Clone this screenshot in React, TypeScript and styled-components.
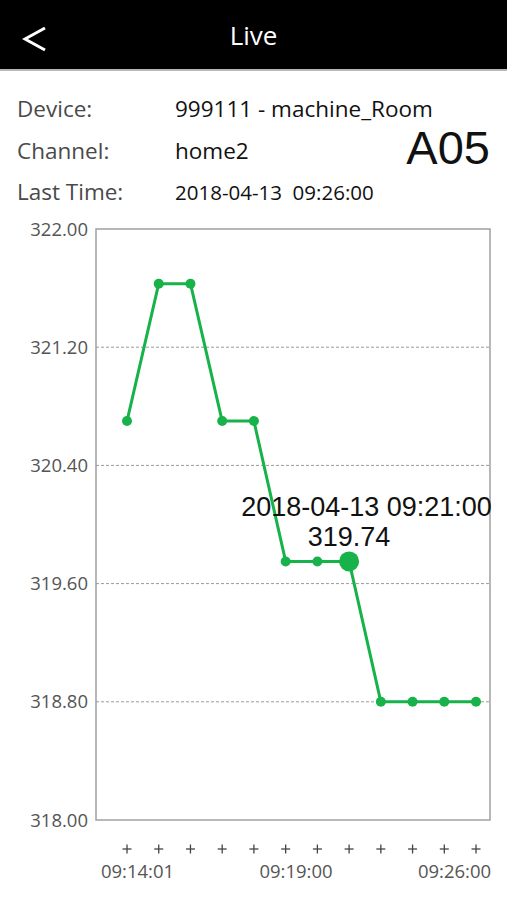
import React from 'react';
import styled, { createGlobalStyle } from 'styled-components';

const GlobalStyle = createGlobalStyle`
  html, body {
    margin: 0;
    padding: 0;
    background: #ffffff;
  }
  body {
    font-family: "Open Sans", "Noto Sans", sans-serif;
  }
`;

const values = [320.7, 321.63, 321.63, 320.7, 320.7, 319.75, 319.75, 319.75, 318.8, 318.8, 318.8, 318.8];
const yTicks = ['322.00', '321.20', '320.40', '319.60', '318.80', '318.00'];

// plot area inside the chart svg (svg starts at page y = 215)
const PLOT = { left: 96, top: 14, right: 490, bottom: 605 };
const MIN = 318;
const MAX = 322;
const STEP_X = 31.73;
const FIRST_X = 127;

const px = (i: number) => FIRST_X + i * STEP_X;
const py = (v: number) => PLOT.top + ((MAX - v) / (MAX - MIN)) * (PLOT.bottom - PLOT.top);

export default function App() {
  const selected = 7;
  const points = values.map((v, i) => `${px(i)},${py(v)}`).join(' ');
  const gridStep = (PLOT.bottom - PLOT.top) / 5;

  return (
    <Page>
      <GlobalStyle />
      <Header>
        <BackButton>
          <svg width="26" height="26" viewBox="0 0 26 26">
            <polyline points="23,2 3,13 23,24" fill="none" stroke="#fff" strokeWidth="3" />
          </svg>
        </BackButton>
        <Title>Live</Title>
      </Header>

      <Info>
        <Label>Device:</Label>
        <Value $wide>999111 - machine_Room</Value>
        <Label>Channel:</Label>
        <Value>home2</Value>
        <Code>A05</Code>
        <Label>Last Time:</Label>
        <Value $small>2018-04-13&nbsp;&nbsp;09:26:00</Value>
      </Info>

      <Chart width="507" height="685" viewBox="0 0 507 685">
        {[1, 2, 3, 4].map((k) => (
          <line
            key={k}
            x1={PLOT.left}
            x2={PLOT.right}
            y1={PLOT.top + k * gridStep}
            y2={PLOT.top + k * gridStep}
            stroke="#9a9a9a"
            strokeWidth="1"
            strokeDasharray="3 2"
          />
        ))}
        <rect
          x={PLOT.left}
          y={PLOT.top}
          width={PLOT.right - PLOT.left}
          height={PLOT.bottom - PLOT.top}
          fill="none"
          stroke="#a0a0a0"
          strokeWidth="1.5"
        />
        {yTicks.map((t, k) => (
          <AxisText key={t} x="88" y={PLOT.top + k * gridStep + 6.5} textAnchor="end">
            {t}
          </AxisText>
        ))}

        <polyline points={points} fill="none" stroke="#18b24b" strokeWidth="3" strokeLinejoin="round" />
        {values.map((v, i) => (
          <circle key={i} cx={px(i)} cy={py(v)} r={i === selected ? 10 : 5} fill="#18b24b" />
        ))}

        <TipText x="366.5" y="301" textAnchor="middle">2018-04-13 09:21:00</TipText>
        <TipText x="349" y="331" textAnchor="middle">319.74</TipText>

        {values.map((_, i) => (
          <g key={i} stroke="#444" strokeWidth="1.3">
            <line x1={px(i) - 4.5} x2={px(i) + 4.5} y1="634" y2="634" />
            <line x1={px(i)} x2={px(i)} y1="629.5" y2="638.5" />
          </g>
        ))}
        <AxisText x="137.5" y="663" textAnchor="middle">09:14:01</AxisText>
        <AxisText x="296" y="663" textAnchor="middle">09:19:00</AxisText>
        <AxisText x="454.5" y="663" textAnchor="middle">09:26:00</AxisText>
      </Chart>
    </Page>
  );
}

const Page = styled.div`
  width: 507px;
  height: 900px;
  overflow: hidden;
  background: #fff;
`;

const Header = styled.div`
  position: relative;
  height: 69px;
  background: #000;
  border-bottom: 2px solid #b8b8b8;
  display: flex;
  align-items: center;
  justify-content: center;
`;

const BackButton = styled.div`
  position: absolute;
  left: 22px;
  top: 26px;
  width: 26px;
  height: 26px;
  display: flex;
`;

const Title = styled.div`
  color: #fff;
  font-size: 26px;
  font-family: "Open Sans", "Noto Sans", sans-serif;
`;

const Info = styled.div`
  display: grid;
  grid-template-columns: 158px 1fr auto;
  grid-auto-rows: 41.5px;
  align-items: center;
  padding: 17px 17px 0 17px;
  height: 127px;
`;

const Label = styled.div`
  font-size: 22.5px;
  color: #4a4a4a;
  font-family: "Open Sans", "Noto Sans", sans-serif;
`;

const Value = styled.div<{ $wide?: boolean; $small?: boolean }>`
  grid-column: ${(p) => (p.$wide ? '2 / span 2' : 'auto')};
  font-size: ${(p) => (p.$small ? '20.5px' : '22.5px')};
  color: #111;
  font-family: "Open Sans", "Noto Sans", sans-serif;
  white-space: nowrap;
`;

const Code = styled.div`
  grid-row: 2 / span 1;
  grid-column: 3;
  font-family: "Liberation Sans", Arial, sans-serif;
  font-size: 47px;
  line-height: 1;
  color: #111;
  margin-top: -6px;
`;

const Chart = styled.svg`
  display: block;
`;

const AxisText = styled.text`
  font-family: "Open Sans", "Noto Sans", sans-serif;
  font-size: 18.5px;
  fill: #555;
`;

const TipText = styled.text`
  font-family: "Liberation Sans", Arial, sans-serif;
  font-size: 27px;
  fill: #111;
`;
